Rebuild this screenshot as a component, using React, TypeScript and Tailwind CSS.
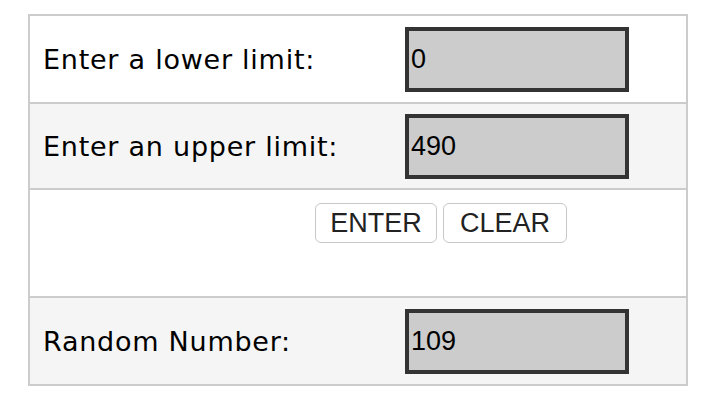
export default function App() {
  const label =
    "pl-[13px] pt-[3px] w-[375px] shrink-0 text-[27px] tracking-[0.75px] text-black [font-family:'DejaVu_Sans',Verdana,sans-serif]";
  const input =
    "w-[224px] h-[65px] border-[4px] border-[#333333] bg-[#cccccc] pl-[2px] text-[27px] text-black [font-family:'Liberation_Sans',Arial,sans-serif] outline-none";
  const btn =
    "h-[40px] rounded-[6px] border border-[#c8c8c8] bg-white text-[27px] text-[#222222] [font-family:'Liberation_Sans',Arial,sans-serif] leading-none";
  return (
    <div className="w-[702px] h-[406px] bg-white pt-[14px] pl-[28px]">
      <div className="w-[660px] border-2 border-[#cccccc] flex flex-col">
        <div className="h-[86px] flex items-center bg-white">
          <div className={label}>Enter a lower limit:</div>
          <input className={input} defaultValue="0" />
        </div>
        <div className="h-[86px] flex items-center bg-[#f5f5f5] border-t-2 border-[#cccccc]">
          <div className={label}>Enter an upper limit:</div>
          <input className={input} defaultValue="490" />
        </div>
        <div className="h-[108px] flex items-start pt-[13px] pl-[285px] gap-[6px] bg-white border-t-2 border-[#cccccc]">
          <button className={`${btn} w-[122px]`}>ENTER</button>
          <button className={`${btn} w-[124px]`}>CLEAR</button>
        </div>
        <div className="h-[88px] flex items-center bg-[#f5f5f5] border-t-2 border-[#cccccc]">
          <div className={label}>Random Number:</div>
          <input className={input} defaultValue="109" />
        </div>
      </div>
    </div>
  );
}
